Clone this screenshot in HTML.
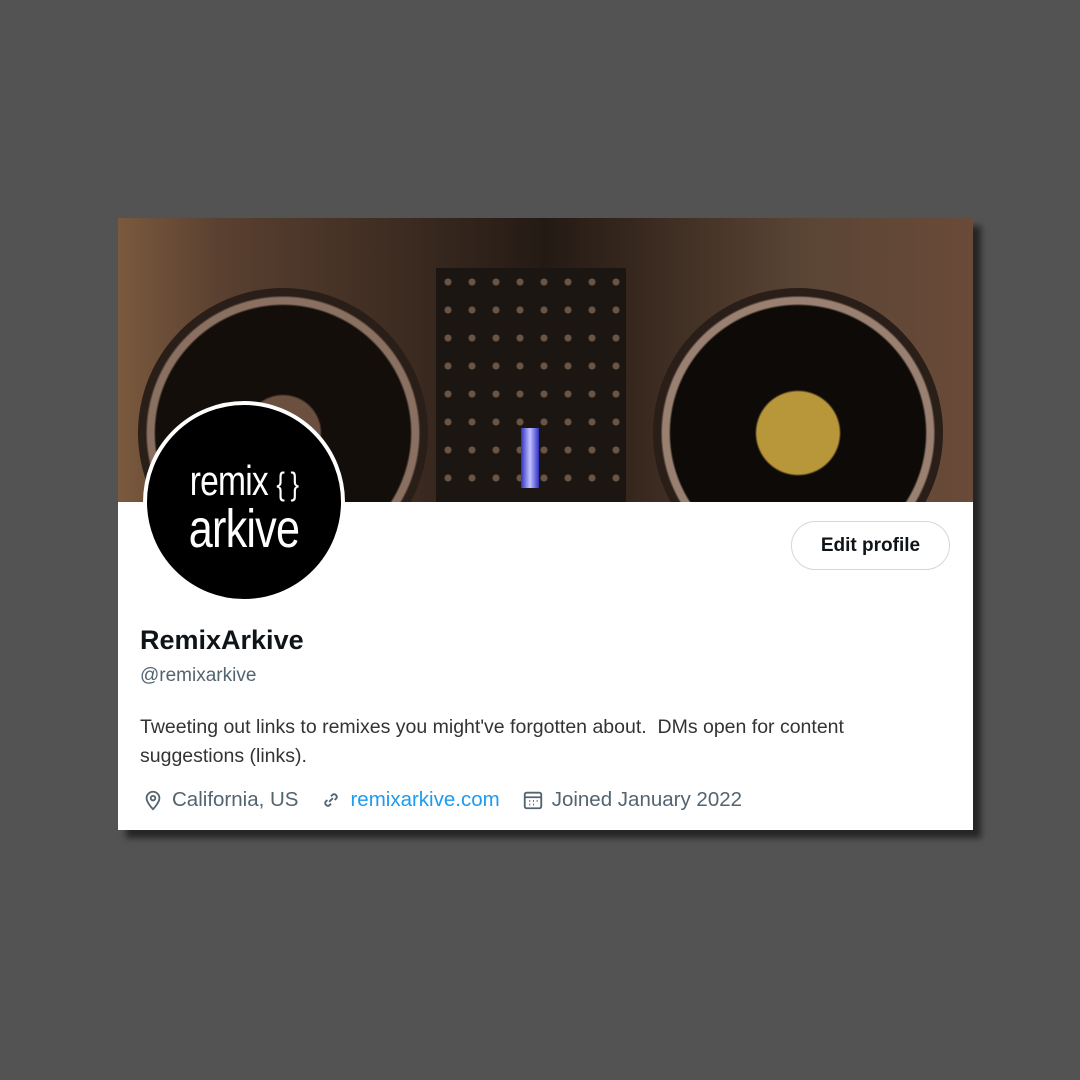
<!DOCTYPE html>
<html><head><style>
body{margin:0;width:1080px;height:1080px;background:#535353;position:relative;overflow:hidden;font-family:"Liberation Sans",sans-serif}
.card{position:absolute;left:118px;top:218px;width:855px;height:612px;background:#fff;box-shadow:8px 8px 6px rgba(0,0,0,.55)}
.banner{position:absolute;left:0;top:0;width:855px;height:284px;overflow:hidden;background:linear-gradient(90deg,#7a5a3e 0%,#5a4030 12%,#3a2a20 35%,#241a14 50%,#3a2a20 62%,#5a4535 80%,#6a4a38 100%)}
.tt{position:absolute;border-radius:50%}
.av{position:absolute;left:25px;top:183px;width:194px;height:194px;border-radius:50%;background:#000;border:4px solid #fff;color:#fff;text-align:center;font-family:"Liberation Sans Narrow","Liberation Sans",sans-serif}
.btn{position:absolute;right:23px;top:303px;width:159px;height:49px;border:1px solid #cfd9de;border-radius:25px;box-sizing:border-box;text-align:center;line-height:47px;font-weight:bold;font-size:19px;color:#0f1419}
.t{position:absolute;left:22px;color:#0f1419}
.meta{position:absolute;left:24px;top:570px;font-size:20.5px;color:#536471;display:flex;align-items:center;gap:8px}
</style></head><body>
<div class="card">
 <div class="banner">
  <div class="tt" style="left:20px;top:70px;width:290px;height:290px;background:radial-gradient(circle,#6b5040 0 18%,#140e0b 19% 62%,#8a7060 63% 66%,#2a1e18 67%)"></div>
  <div class="tt" style="left:535px;top:70px;width:290px;height:290px;background:radial-gradient(circle,#b8963a 0 20%,#0e0a08 21% 62%,#9a8070 63% 66%,#2a1e18 67%)"></div>
  <div style="position:absolute;left:318px;top:50px;width:190px;height:234px;background:#1c1612;background-image:radial-gradient(circle,#6a5444 3px,transparent 4px);background-size:24px 28px"></div>
  <div style="position:absolute;left:403px;top:210px;width:18px;height:60px;background:linear-gradient(90deg,#3030c0,#c0c0ff,#3030c0)"></div>
 </div>
 <div class="av"><div style="transform:scaleX(.8);margin-top:56px"><div style="font-size:42px;line-height:40px;letter-spacing:-1px">remix <span style="font-size:32px">{ }</span></div><div style="font-size:54px;line-height:50px;letter-spacing:-1px">arkive</div></div></div>
 <div class="btn">Edit profile</div>
 <div class="t" style="top:407px;font-size:27px;font-weight:bold">RemixArkive</div>
 <div class="t" style="top:447px;font-size:19px;color:#536471">@remixarkive</div>
 <div class="t" style="top:495px;font-size:19.5px;line-height:29px;width:808px;color:#333">Tweeting out links to remixes you might've forgotten about.&nbsp; DMs open for content suggestions (links).</div>
 <div class="meta">
  <svg width="22" height="22" viewBox="0 0 24 24" fill="none" stroke="#536471" stroke-width="2"><path d="M12 22s-7-7-7-12a7 7 0 0114 0c0 5-7 12-7 12z"/><circle cx="12" cy="10" r="2.5"/></svg><span style="margin-right:14px">California, US</span>
  <svg width="22" height="22" viewBox="0 0 24 24" fill="none" stroke="#536471" stroke-width="2"><path d="M10 14l4-4M8 12l-2 2a3 3 0 004 4l2-2M16 12l2-2a3 3 0 00-4-4l-2 2"/></svg><span style="color:#1d9bf0;margin-right:14px">remixarkive.com</span>
  <svg width="22" height="22" viewBox="0 0 24 24" fill="none" stroke="#536471" stroke-width="2"><rect x="3" y="4" width="18" height="17" rx="2"/><path d="M3 9h18M8 13h1M12 13h1M16 13h1M8 17h1M12 17h1"/></svg><span>Joined January 2022</span>
 </div>
</div>
</body></html>
